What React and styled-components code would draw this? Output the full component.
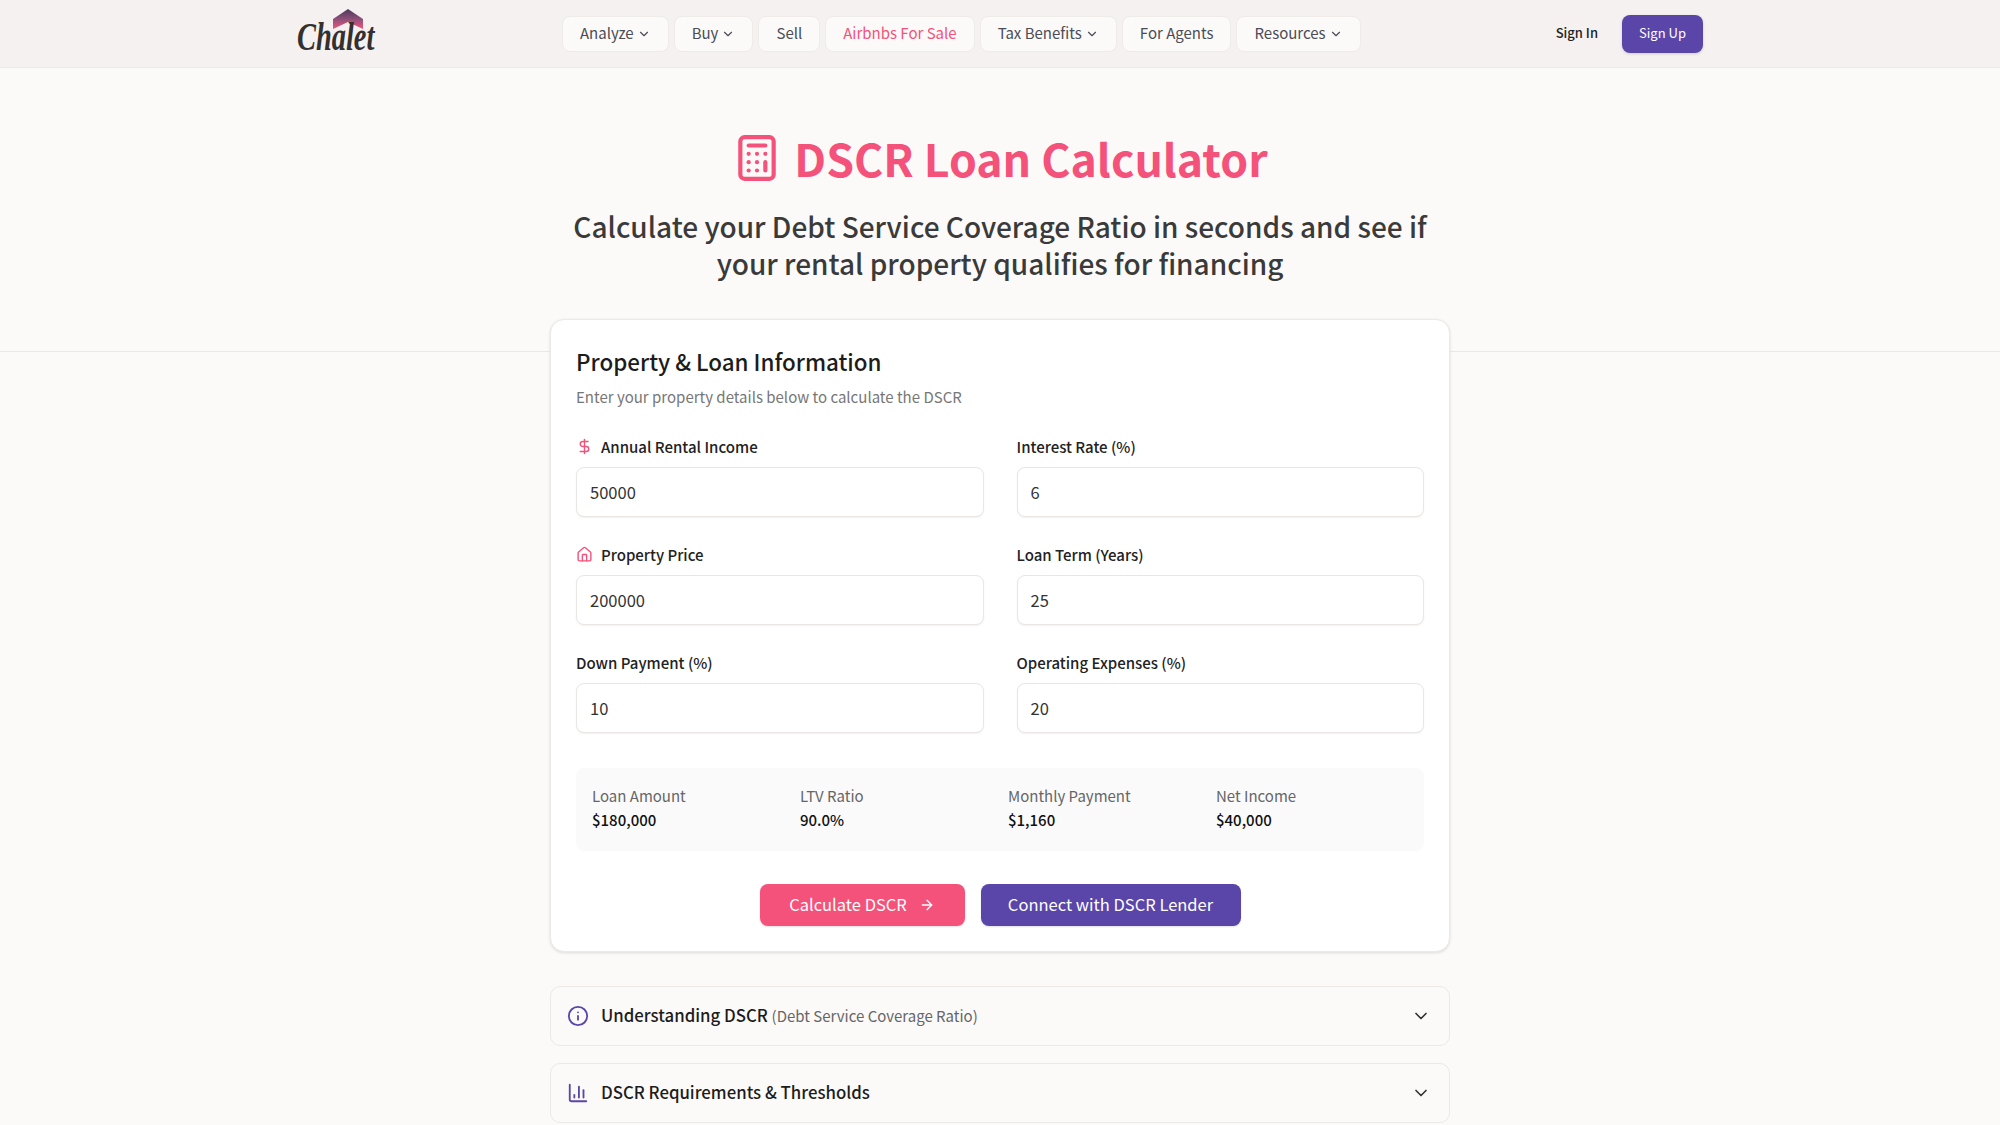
import React from "react";
import styled, { createGlobalStyle } from "styled-components";
import {
  ArrowRight,
  Calculator,
  ChartColumn,
  ChevronDown,
  DollarSign,
  House,
  Info,
} from "lucide-react";

const GlobalStyle = createGlobalStyle`
  html, body {
    margin: 0;
    padding: 0;
    height: 1125px;
    overflow: hidden;
    background: #fcfaf8;
    color: #333;
    font-family: "Noto Sans CJK JP", "Noto Sans", sans-serif;
  }
  * { box-sizing: border-box; }
`;

const fields = [
  { label: "Annual Rental Income", value: "50000", icon: DollarSign },
  { label: "Interest Rate (%)", value: "6" },
  { label: "Property Price", value: "200000", icon: House },
  { label: "Loan Term (Years)", value: "25" },
  { label: "Down Payment (%)", value: "10" },
  { label: "Operating Expenses (%)", value: "20" },
];

const stats = [
  { label: "Loan Amount", value: "$180,000" },
  { label: "LTV Ratio", value: "90.0%" },
  { label: "Monthly Payment", value: "$1,160" },
  { label: "Net Income", value: "$40,000" },
];

const Logo = () => (
  <LogoWrap>
    <LogoRoof viewBox="0 0 30 20" aria-hidden="true">
      <defs>
        <linearGradient id="roof" x1="0" y1="0" x2="0" y2="1">
          <stop offset="0" stopColor="#4b3a5c" />
          <stop offset="0.5" stopColor="#8d4f78" />
          <stop offset="1" stopColor="#f4527a" />
        </linearGradient>
      </defs>
      <path d="M15 0 30 10v10L15 13 0 20V10z" fill="url(#roof)" />
    </LogoRoof>
    <LogoText>Chalet</LogoText>
  </LogoWrap>
);

const App = () => (
  <>
    <GlobalStyle />
    <Header>
      <Logo />
      <Nav>
        <NavItem>
          Analyze <ChevronDown size={14} />
        </NavItem>
        <NavItem>
          Buy <ChevronDown size={14} />
        </NavItem>
        <NavItem>Sell</NavItem>
        <NavItem $active>Airbnbs For Sale</NavItem>
        <NavItem>
          Tax Benefits <ChevronDown size={14} />
        </NavItem>
        <NavItem>For Agents</NavItem>
        <NavItem>
          Resources <ChevronDown size={14} />
        </NavItem>
      </Nav>
      <Auth>
        <SignIn>Sign In</SignIn>
        <SignUp>Sign Up</SignUp>
      </Auth>
    </Header>

    <Hero>
      <Title>
        <Calculator size={50} strokeWidth={2} />
        DSCR Loan Calculator
      </Title>
      <Subtitle>
        Calculate your Debt Service Coverage Ratio in seconds and see if your
        rental property qualifies for financing
      </Subtitle>
    </Hero>

    <Main>
      <Card>
        <CardTitle>Property &amp; Loan Information</CardTitle>
        <CardHint>Enter your property details below to calculate the DSCR</CardHint>
        <FieldGrid>
          {fields.map(({ label, value, icon: Icon }) => (
            <Field key={label}>
              <Label>
                {Icon && <Icon size={17} />}
                {label}
              </Label>
              <Input readOnly value={value} />
            </Field>
          ))}
        </FieldGrid>
        <Stats>
          {stats.map((s) => (
            <div key={s.label}>
              <StatLabel>{s.label}</StatLabel>
              <StatValue>{s.value}</StatValue>
            </div>
          ))}
        </Stats>
        <Actions>
          <ActionButton $color="#f4527a">
            Calculate DSCR <ArrowRight size={16} />
          </ActionButton>
          <ActionButton $color="#5a45a8" $wide>
            Connect with DSCR Lender
          </ActionButton>
        </Actions>
      </Card>

      <Accordion>
        <Info size={22} />
        <AccordionTitle>
          Understanding DSCR <small>(Debt Service Coverage Ratio)</small>
        </AccordionTitle>
        <ChevronDown size={20} />
      </Accordion>
      <Accordion>
        <ChartColumn size={22} />
        <AccordionTitle>DSCR Requirements &amp; Thresholds</AccordionTitle>
        <ChevronDown size={20} />
      </Accordion>
    </Main>
  </>
);

const Header = styled.header`
  height: 68px;
  padding: 0 297px;
  display: flex;
  align-items: center;
  background: #f6f1f1;
  border-bottom: 1px solid #ece8e6;
`;

const LogoWrap = styled.div`
  width: 265px;
  height: 56px;
  padding-top: 3px;
  position: relative;
  flex: none;
`;

const LogoRoof = styled.svg`
  display: block;
  width: 30px;
  height: 20px;
  margin-left: 36px;
`;

const LogoText = styled.span`
  position: absolute;
  left: 0;
  top: 9px;
  font-family: "Liberation Serif", serif;
  font-style: italic;
  font-weight: 700;
  font-size: 40px;
  line-height: 44px;
  color: #33302f;
  transform: scaleX(0.71);
  transform-origin: left center;
`;

const Nav = styled.nav`
  display: flex;
  gap: 5px;
  flex: 1;
`;

const NavItem = styled.div`
  height: 36px;
  padding: 0 17px 2px;
  display: flex;
  align-items: center;
  gap: 3px;
  font-size: 15px;
  font-weight: 400;
  color: ${(props) => (props.$active ? "#f4527a" : "#4a4d57")};
  background: #fcfaf8;
  border: 1px solid #efebe9;
  border-radius: 8px;
  svg { margin-top: 2px; }
`;

const Auth = styled.div`
  display: flex;
  align-items: center;
  gap: 24px;
`;

const SignIn = styled.span`
  padding-bottom: 2px;
  font-size: 13px;
  font-weight: 500;
  color: #222;
`;

const SignUp = styled.button`
  width: 81px;
  height: 38px;
  padding: 0 0 2px;
  border: 0;
  border-radius: 8px;
  background: #5a45a8;
  color: #fff;
  font: 400 13px "Noto Sans CJK JP", sans-serif;
  box-shadow: 0 1px 3px rgba(0, 0, 0, 0.15);
`;

const Hero = styled.section`
  height: 284px;
  padding-top: 65px;
  text-align: center;
  border-bottom: 1px solid #ece8e6;
`;

const Title = styled.h1`
  margin: 0;
  display: flex;
  justify-content: center;
  align-items: center;
  gap: 12px;
  font-size: 44.6px;
  line-height: 50px;
  font-weight: 700;
  color: #f4527a;
`;

const Subtitle = styled.p`
  width: 900px;
  margin: 25px auto 0;
  font-size: 28px;
  line-height: 37px;
  font-weight: 500;
  color: #3a3a3a;
`;

const Main = styled.main`
  width: 900px;
  margin: -33px auto 0;
  position: relative;
`;

const Card = styled.div`
  padding: 25px;
  background: #fff;
  border: 1px solid #ece8e6;
  border-radius: 14px;
  box-shadow: 0 1px 3px rgba(0, 0, 0, 0.12);
`;

const CardTitle = styled.h2`
  margin: 0;
  font-size: 22.4px;
  line-height: 32px;
  font-weight: 500;
  color: #1c1c1c;
`;

const CardHint = styled.p`
  margin: 8px 0 0;
  font-size: 15px;
  line-height: 24px;
  color: #777;
`;

const FieldGrid = styled.div`
  display: grid;
  grid-template-columns: 1fr 1fr;
  column-gap: 33px;
  row-gap: 25px;
  margin-top: 25px;
`;

const Field = styled.div`
  display: flex;
  flex-direction: column;
  gap: 9px;
`;

const Label = styled.label`
  height: 24px;
  display: flex;
  align-items: center;
  gap: 8px;
  font-size: 15px;
  font-weight: 500;
  color: #222;
  svg { color: #f4527a; }
`;

const Input = styled.input`
  height: 50px;
  padding: 0 13px;
  border: 1px solid #e9e6e4;
  border-radius: 8px;
  font: 400 16.5px "Noto Sans CJK JP", sans-serif;
  color: #333;
  box-shadow: 0 1px 2px rgba(0, 0, 0, 0.06);
  outline: none;
`;

const Stats = styled.div`
  display: grid;
  grid-template-columns: repeat(4, 208px);
  margin-top: 35px;
  height: 83px;
  padding: 16px;
  background: #fafafb;
  border-radius: 8px;
`;

const StatLabel = styled.div`
  font-size: 15px;
  line-height: 24px;
  color: #666;
`;

const StatValue = styled.div`
  font-size: 15px;
  line-height: 24px;
  font-weight: 500;
  color: #111;
`;

const Actions = styled.div`
  display: flex;
  justify-content: center;
  gap: 16px;
  margin-top: 33px;
`;

const ActionButton = styled.button`
  width: ${(props) => (props.$wide ? "260px" : "205px")};
  height: 42px;
  padding: 0 0 2px;
  display: flex;
  justify-content: center;
  align-items: center;
  gap: 12px;
  border: 0;
  border-radius: 8px;
  background: ${(props) => props.$color};
  color: #fff;
  font: 400 16.5px "Noto Sans CJK JP", sans-serif;
  box-shadow: 0 1px 2px rgba(0, 0, 0, 0.12);
  svg { margin-top: 2px; }
`;

const Accordion = styled.div`
  height: 60px;
  margin-top: 34px;
  padding: 0 18px 0 16px;
  display: flex;
  align-items: center;
  gap: 12px;
  border: 1px solid #ece8e6;
  border-radius: 10px;
  color: #5a45a8;

  & + & { margin-top: 17px; }
  & > svg:last-child { color: #333; }
`;

const AccordionTitle = styled.div`
  flex: 1;
  padding-bottom: 2px;
  font-size: 16.8px;
  font-weight: 500;
  color: #1c1c1c;

  small {
    font-size: 15px;
    font-weight: 400;
    color: #666;
  }
`;

export default App;
